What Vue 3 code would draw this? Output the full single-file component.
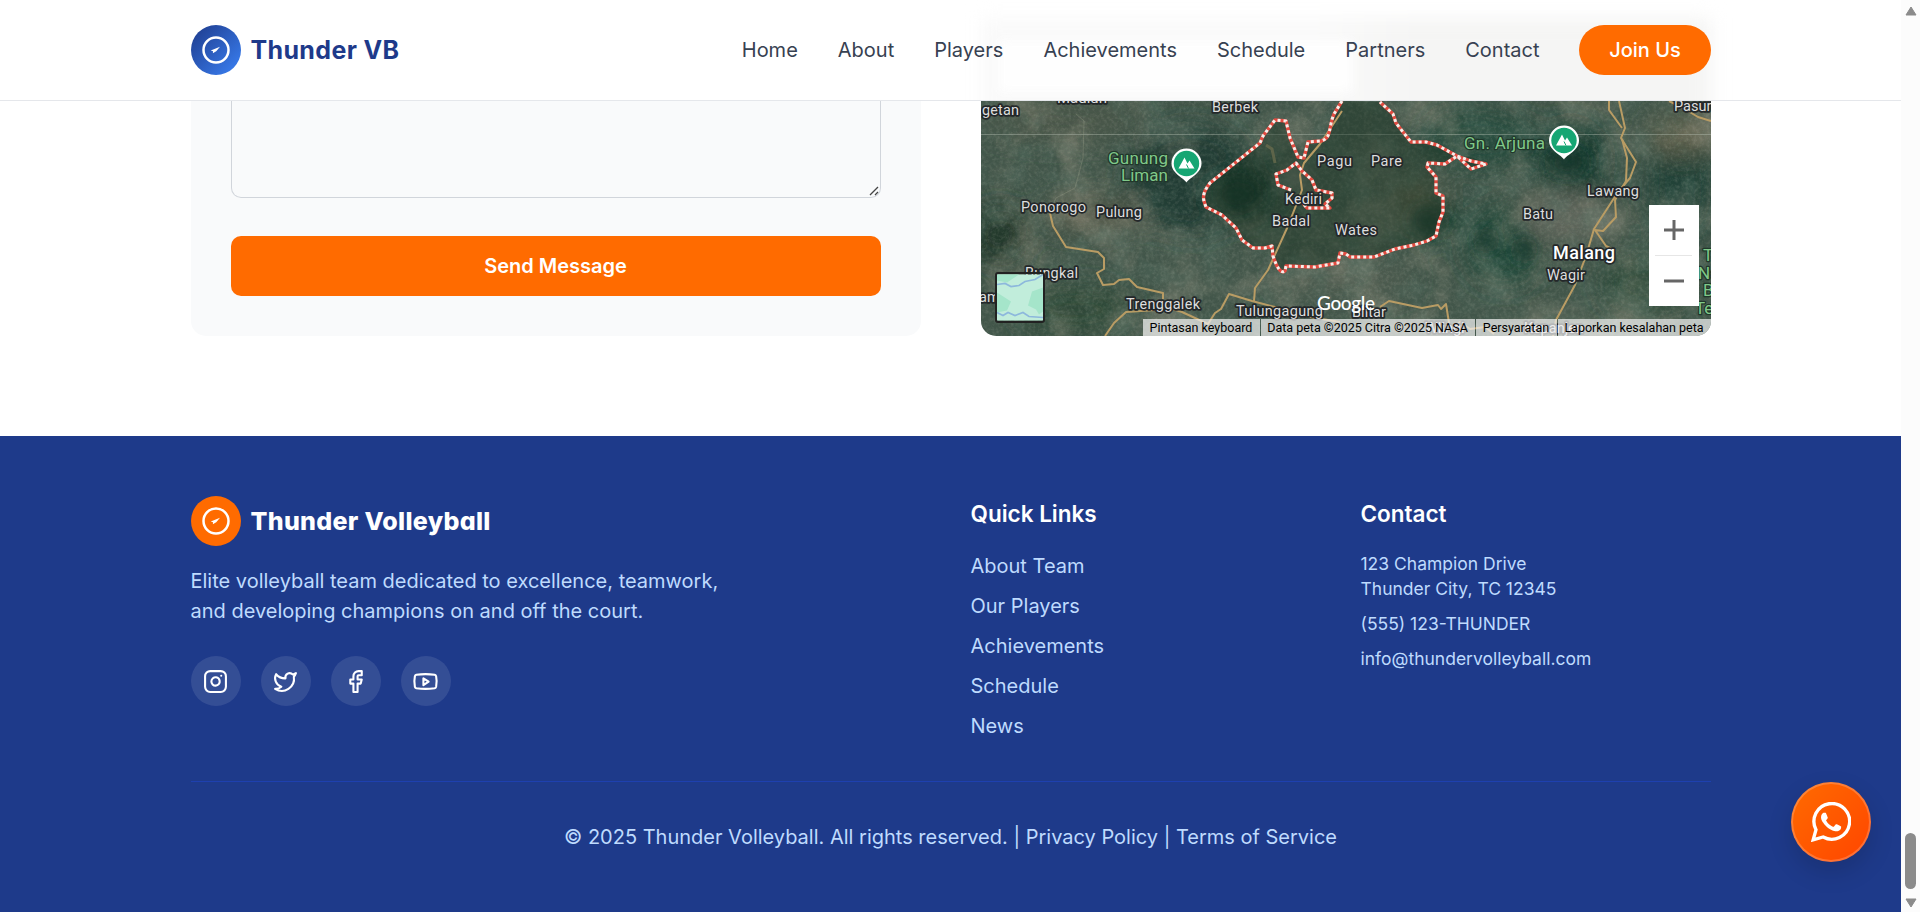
<script setup>
const nav = ['Home', 'About', 'Players', 'Achievements', 'Schedule', 'Partners', 'Contact']
const links = ['About Team', 'Our Players', 'Achievements', 'Schedule', 'News']
const labels = [
  { t: 'getan', x: 982, y: 115, s: 14.5 },
  { t: 'Madiun', x: 1057, y: 103, s: 15 },
  { t: 'Berbek', x: 1212, y: 112, s: 14.5 },
  { t: 'Pagu', x: 1317, y: 166, s: 14.5 },
  { t: 'Pare', x: 1371, y: 165.5, s: 14.5 },
  { t: 'Ponorogo', x: 1021, y: 211.5, s: 14.5 },
  { t: 'Pulung', x: 1096, y: 216.5, s: 14.5 },
  { t: 'Kediri', x: 1285, y: 203.5, s: 14.5 },
  { t: 'Badal', x: 1272, y: 226, s: 14.5 },
  { t: 'Wates', x: 1335, y: 234.5, s: 14.5 },
  { t: 'Bungkal', x: 1025, y: 278, s: 14.5 },
  { t: 'am', x: 979, y: 302, s: 14.5 },
  { t: 'Trenggalek', x: 1126, y: 308.5, s: 14.5 },
  { t: 'Tulungagung', x: 1236, y: 316, s: 14.5 },
  { t: 'Blitar', x: 1352, y: 317, s: 14.5 },
  { t: 'Batu', x: 1523, y: 219, s: 14.5 },
  { t: 'Lawang', x: 1587, y: 196, s: 14.5 },
  { t: 'Malang', x: 1553, y: 259, s: 18 },
  { t: 'Wagir', x: 1547, y: 279.5, s: 14.5 },
  { t: 'Pasuruan', x: 1674, y: 111, s: 14.5 },
  { t: 'Wlingi', x: 1425, y: 333, s: 14.5 },
  { t: 'Kepanjen', x: 1524, y: 333, s: 14.5 },
]
const greens = [
  { t: 'Gunung', x: 1168, y: 163.5, a: 'end' },
  { t: 'Liman', x: 1168, y: 181, a: 'end' },
  { t: 'Gn. Arjuna', x: 1545, y: 149, a: 'end' },
  { t: 'Taman', x: 1703, y: 261, a: 'start' },
  { t: 'Nasional', x: 1698, y: 279, a: 'start' },
  { t: 'Bromo', x: 1703, y: 296, a: 'start' },
  { t: 'Tengger', x: 1695, y: 314, a: 'start' },
]
const widths = { getan: 37, Berbek: 46, Pagu: 35, Pare: 31, Ponorogo: 65, Pulung: 46, Kediri: 37, Badal: 38, Wates: 42, Bungkal: 53, Trenggalek: 74, Tulungagung: 87, Blitar: 34, Batu: 30, Lawang: 52, Malang: 62, Wagir: 38, Gunung: 60, Liman: 47, 'Gn. Arjuna': 81 }
</script>

<template>
  <div class="page">
    <div class="site">
      <header class="header">
        <div class="haze"><span class="haze-map" /><span class="haze-card" /></div>
        <div class="wrap bar">
          <div class="brand">
            <span class="logo blue"><svg width="30" height="30" viewBox="0 0 24 24"><circle cx="12" cy="12" r="10" fill="none" stroke="#fff" stroke-width="2" /><path d="M15.2 9.4 7.800 12.400 9.600 12.900 9.500 14.600 12.200 13Z" fill="#fff" /></svg></span>
            <span class="name top-name">Thunder VB</span>
          </div>
          <nav class="nav">
            <a v-for="n in nav" :key="n">{{ n }}</a>
            <button class="join">Join Us</button>
          </nav>
        </div>
      </header>

      <main class="wrap contact">
        <form class="card">
          <div class="textarea">
            <svg class="grip" width="10" height="10" viewBox="0 0 10 10"><path d="M1 9 9 1M6 9 9 6" stroke="#444" stroke-width="1.3" fill="none" /></svg>
          </div>
          <button type="button" class="send">Send Message</button>
        </form>

        <div class="map">
          <svg class="terrain" width="730" height="235" viewBox="981 101 730 235">
            <defs>
              <filter id="grain" x="0" y="0" width="100%" height="100%">
                <feTurbulence type="fractalNoise" baseFrequency="0.28" numOctaves="3" seed="8" />
                <feColorMatrix values="0 0 0 0 0.6  0 0 0 0 0.6  0 0 0 0 0.5  1.5 0.5 0 0 -0.83" />
              </filter>
              <filter id="patch" x="0" y="0" width="100%" height="100%">
                <feTurbulence type="fractalNoise" baseFrequency="0.02" numOctaves="5" seed="21" />
                <feColorMatrix values="0 0 0 0 0.43  0 0 0 0 0.38  0 0 0 0 0.29  0 3 0 0 -1.35" />
              </filter>
              <filter id="shade" x="0" y="0" width="100%" height="100%">
                <feTurbulence type="fractalNoise" baseFrequency="0.035" numOctaves="5" seed="5" />
                <feColorMatrix values="0 0 0 0 0.1  0 0 0 0 0.18  0 0 0 0 0.14  0 0 3 0 -1.35" />
              </filter>
              <filter id="soft" x="-40%" y="-40%" width="180%" height="180%"><feGaussianBlur stdDeviation="12" /></filter>
              <filter id="soft2" x="-40%" y="-40%" width="180%" height="180%"><feGaussianBlur stdDeviation="7" /></filter>
            </defs>
            <rect x="981" y="101" width="730" height="235" fill="#42564a" />
            <g filter="url(#soft)">
              <ellipse cx="1060" cy="120" rx="80" ry="22" fill="#48574a" />
              <ellipse cx="1190" cy="180" rx="65" ry="55" fill="#233e34" />
              <ellipse cx="1240" cy="195" rx="38" ry="28" fill="#12362a" />
              <ellipse cx="1090" cy="215" rx="50" ry="16" fill="#535848" />
              <ellipse cx="1000" cy="235" rx="30" ry="30" fill="#21382b" />
              <ellipse cx="1075" cy="310" rx="60" ry="25" fill="#2d4a39" />
              <ellipse cx="1430" cy="218" rx="30" ry="22" fill="#0f3a2b" />
              <ellipse cx="1480" cy="140" rx="55" ry="30" fill="#284b3c" />
              <ellipse cx="1570" cy="160" rx="38" ry="40" fill="#173c30" />
              <ellipse cx="1505" cy="245" rx="40" ry="42" fill="#23493a" />
              <ellipse cx="1415" cy="195" rx="25" ry="18" fill="#5d604d" />
              <ellipse cx="1565" cy="218" rx="45" ry="26" fill="#60665b" />
              <ellipse cx="1680" cy="190" rx="35" ry="55" fill="#234238" />
              <ellipse cx="1680" cy="135" rx="32" ry="20" fill="#5d5e4b" />
              <ellipse cx="1650" cy="285" rx="50" ry="30" fill="#2d4b3b" />
              <ellipse cx="1345" cy="280" rx="70" ry="22" fill="#4d5c50" />
            </g>
            <rect x="981" y="101" width="730" height="235" filter="url(#patch)" opacity=".32" />
            <rect x="981" y="101" width="730" height="235" filter="url(#shade)" opacity=".35" />
            <rect x="981" y="101" width="730" height="235" filter="url(#grain)" opacity=".2" />
            <g filter="url(#soft2)" fill="#123629" opacity=".75">
              <ellipse cx="1238" cy="194" rx="22" ry="17" /><ellipse cx="1428" cy="220" rx="18" ry="16" />
              <ellipse cx="1568" cy="162" rx="20" ry="14" /><ellipse cx="1486" cy="240" rx="9" ry="12" /><ellipse cx="1524" cy="250" rx="9" ry="12" />
            </g>
            <ellipse cx="1294" cy="178" rx="17" ry="14" fill="#777a70" opacity=".6" filter="url(#soft2)" />
            <path d="M1266 145l6 4 3 14" stroke="#a99a70" stroke-width="3" fill="none" opacity=".7" />
            <path d="M981 134.5H1711" stroke="#b8c2b6" stroke-opacity=".4" />
            <path d="M1076 114 1084 121 1083 158 1075 188 1056 198 1050 211" fill="none" stroke="#a1a58f" stroke-opacity=".3" />
            <path class="district" d="M1342 101 1334 114C1328 128 1332 138 1321 141L1308 142 1304 158 1298 157 1290 138 1286 121 1275 120 1263 136 1260 143 1210 183C1200 196 1204 201 1206 207L1222 215 1236 228 1242 240 1253 248 1265 248 1272 246 1273 256C1277 268 1281 274 1285 271L1286 266 1315 267 1338 263 1340 253 1346 254 1350 257 1374 257 1395 249 1414 245 1427 241 1436 236 1439 222 1443 212 1443 196 1436 190 1436 177 1427 167 1428 163 1445 164 1457 156 1471 157 1487 164 1470 169 1455 156 1437 145 1426 142 1411 142 1403 132 1396 123 1393 114 1380 102" fill="#17301f" fill-opacity=".4" />
            <g class="roads">
              <path d="M1342 111 1320 144 1304 163 1300 175 1302 190 1288 226 1268 270 1255 288 1254 301" />
              <path d="M1050 213 1053 226 1066 247 1098 252 1104 258 1104 269 1097 273 1103 285 1114 284 1119 280 1129 279 1137 287 1163 293 1163 306 1182 312 1208 324 1215 313 1221 309 1229 294 1252 301 1275 307 1310 317 1340 322" />
              <path d="M1105 336 1114 323 1126 312 1156 310" />
              <path d="M1380 307 1389 301 1422 308 1438 305 1441 309 1446 304 1450 329 1460 322 1470 329 1485 327 1494 334" />
              <path d="M1619 101 1625 128 1621 138 1636 162 1630 178 1618 192 1594 229 1586 256 1575 285 1556 320 1553 336" />
              <path d="M1609 101V110L1622 128M1622 139 1627 158 1626 181 1615 200 1616 217 1603 231 1595 230 1606 246 1612 249" />
              <path d="M1669 101 1683 108 1698 117 1711 121" />
            </g>
            <g class="border">
              <path id="outer" d="M1342 101 1334 114C1328 128 1332 138 1321 141L1308 142 1304 158 1298 157 1290 138 1286 121 1275 120 1263 136 1260 143 1210 183C1200 196 1204 201 1206 207L1222 215 1236 228 1242 240 1253 248 1265 248 1272 246 1273 256C1277 268 1281 274 1285 271L1286 266 1315 267 1338 263 1340 253 1346 254 1350 257 1374 257 1395 249 1414 245 1427 241 1436 236 1439 222 1443 212 1443 196 1436 193 1436 177 1427 167 1428 163 1445 164 1457 156 1471 169 1486 164 1471 161 1457 156 1437 145 1426 142 1411 142 1403 132 1396 123 1393 114 1380 102" />
              <path id="inner" d="M1291 190 1278 185 1276 174 1287 170 1296 163 1302 171 1312 180 1316 190 1332 193 1332 198 1325 204 1330 208 1307 208 1301 201" />
              <g class="dashes"><use href="#outer" /><use href="#inner" /></g>
            </g>
            <g class="label">
              <text v-for="l in labels" :key="l.t" :x="l.x" :y="l.y" :font-size="l.s" :textLength="widths[l.t]" :class="{ big: l.s > 15 }">{{ l.t }}</text>
            </g>
            <g class="label park">
              <text v-for="g in greens" :key="g.t" :x="g.x" :y="g.y" font-size="17" :text-anchor="g.a" :textLength="widths[g.t]">{{ g.t }}</text>
            </g>
            <g v-for="p in [[1186.5, 163.5], [1564, 140.5]]" :key="p[0]" :transform="`translate(${p[0]} ${p[1]})`">
              <path d="M0 19C-3 14-15 10-15 0A15 15 0 0 1 15 0C15 10 3 14 0 19Z" fill="#fff" />
              <circle r="12.7" fill="#16a673" />
              <path d="M-8 5-2-6 1 0 3-3 8 5Z" fill="#fff" /><path d="M2 5 0 1" stroke="#16a673" />
            </g>
            <text class="google" x="1317" y="310" textLength="58">Google</text>
          </svg>
          <div class="layer">
            <svg width="46" height="46" viewBox="0 0 46 46">
              <path d="M0 0H46V46H0Z" fill="#c1eddb" /><path d="M0 18 14 27 10 36 0 38ZM46 13 35 17 31 31 39 35 42 40 46 37ZM0 0H22L10 8 0 6Z" fill="#a5e5ca" />
              <path d="M0 10 8 9 14 12 22 11 28 7 38 5 46 0M0 38 6 41 11 38 18 41 26 38 32 42 46 43" fill="none" stroke="#8db8dc" stroke-width="1.7" />
            </svg>
          </div>
          <div class="zoom"><span>
            <svg width="22" height="22" viewBox="0 0 22 22"><path d="M1 11H21M11 1V21" stroke="#666" stroke-width="3" /></svg></span><i /><span>
            <svg width="22" height="22" viewBox="0 0 22 22"><path d="M1 11H21" stroke="#666" stroke-width="3" /></svg></span>
          </div>
          <div class="credits"><span class="c1">Pintasan keyboard</span><span class="c2">Data peta ©2025 Citra ©2025 NASA</span><span class="c3">Persyaratan</span><span class="c4">Laporkan kesalahan peta</span></div>
        </div>
      </main>

      <footer class="footer">
        <div class="wrap">
          <div class="cols">
            <section>
              <div class="brand">
                <span class="logo orange"><svg width="30" height="30" viewBox="0 0 24 24"><circle cx="12" cy="12" r="10" fill="none" stroke="#fff" stroke-width="2" /><path d="M15.2 9.4 7.800 12.400 9.600 12.900 9.500 14.600 12.200 13Z" fill="#fff" /></svg></span>
                <span class="name foot-name">Thunder Volleyball</span>
              </div>
              <p class="about">Elite volleyball team dedicated to excellence, teamwork, and developing champions on and off the court.</p>
              <div class="social">
                <a><svg viewBox="0 0 24 24"><rect x="2" y="2" width="20" height="20" rx="5" /><path d="M16 11.37A4 4 0 1 1 12.63 8 4 4 0 0 1 16 11.37zM17.5 6.5h.01" /></svg></a>
                <a><svg viewBox="0 0 24 24"><path d="M22 4s-.7 2.1-2 3.4c1.6 10-9.4 17.3-18 11.6 2.2.1 4.4-.6 6-2C3 15.500.5 9.600 3 5c2.200 2.600 5.600 4.100 9 4-.9-4.200 4-6.600 7-3.800 1.100 0 3-1.200 3-1.200z" /></svg></a>
                <a><svg viewBox="0 0 24 24"><path d="M18 2h-3a5 5 0 0 0-5 5v3H7v4h3v8h4v-8h3l1-4h-4V7a1 1 0 0 1 1-1h3z" /></svg></a>
                <a><svg viewBox="0 0 24 24"><path d="M1.800 17a24.120 24.120 0 0 1 0-10 2 2 0 0 1 1.400-1.400 60 60 0 0 1 17.600 0A2 2 0 0 1 22.200 7a24.120 24.120 0 0 1 0 10 2 2 0 0 1-1.400 1.400 60 60 0 0 1-17.600 0A2 2 0 0 1 1.800 17" /><path d="m10 15.500 5-3.300-5-3.300z" /></svg></a>
              </div>
            </section>
            <section>
              <h3>Quick Links</h3>
              <ul><li v-for="l in links" :key="l">{{ l }}</li></ul>
            </section>
            <section>
              <h3>Contact</h3>
              <address><p>123 Champion Drive<br />Thunder City, TC 12345</p><p>(555) 123-THUNDER</p><p>info@thundervolleyball.com</p></address>
            </section>
          </div>
          <p class="legal">© 2025 Thunder Volleyball. All rights reserved. | Privacy Policy | Terms of Service</p>
        </div>
      </footer>
    </div>

    <div class="scrollbar">
      <svg width="12" height="10" viewBox="0 0 12 10"><path d="M6 1 11 9H1Z" fill="#8b8b8b" stroke="#8b8b8b" stroke-linejoin="round" /></svg>
      <span class="thumb" />
      <svg width="12" height="10" viewBox="0 0 12 10"><path d="M6 9 11 1H1Z" fill="#8b8b8b" stroke="#8b8b8b" stroke-linejoin="round" /></svg>
    </div>

    <a class="chat">
      <svg width="40" height="40" viewBox="0 0 24 24" fill="#fff"><path d="M17.472 14.382c-.297-.149-1.758-.867-2.030-.967-.273-.099-.471-.148-.670.150-.197.297-.767.966-.940 1.164-.173.199-.347.223-.644.075-.297-.150-1.255-.463-2.390-1.475-.883-.788-1.480-1.761-1.653-2.059-.173-.297-.018-.458.130-.606.134-.133.298-.347.446-.520.149-.174.198-.298.298-.497.099-.198.050-.371-.025-.520-.075-.149-.669-1.612-.916-2.207-.242-.579-.487-.500-.669-.510-.173-.008-.371-.010-.570-.010-.198 0-.520.074-.792.372-.272.297-1.040 1.016-1.040 2.479 0 1.462 1.065 2.875 1.213 3.074.149.198 2.096 3.200 5.077 4.487.709.306 1.262.489 1.694.625.712.227 1.360.195 1.871.118.571-.085 1.758-.719 2.006-1.413.248-.694.248-1.289.173-1.413-.074-.124-.272-.198-.570-.347" /><path d="M1.300 22.700 3 16.600A10.700 10.700 0 1 1 7.300 21Z" fill="none" stroke="#fff" stroke-width="2" /></svg>
    </a>
  </div>
</template>

<style>
html, body { overflow: hidden; background: #fff; }
</style>

<style scoped>
* { box-sizing: border-box; }
p, h3, ul { margin: 0; padding: 0; }
.page { width: 1920px; height: 912px; display: grid; grid-template-columns: 1901px 19px; overflow: hidden; position: relative; font: 20px/30px Inter, "Liberation Sans", sans-serif; color: #374151; }
.site { min-width: 0; }
.wrap { width: 1520px; margin: 0 auto; }
.header { height: 101px; border-bottom: 1px solid #e5e7eb; background: #fff; position: relative; }
.haze { position: absolute; inset: 0; overflow: hidden; }
.haze span { position: absolute; display: block; }
.haze-map { left: 981px; top: 18px; width: 730px; height: 120px; background: linear-gradient(90deg, #fafafa 45%, #f5f5f4 60%); filter: blur(9px); }
.haze-card { left: 998px; top: 40px; width: 355px; height: 52px; background: #fefefe; filter: blur(6px); }
.bar { height: 100px; display: flex; align-items: center; justify-content: space-between; position: relative; }
.brand { display: flex; align-items: center; gap: 10px; height: 50px; }
.logo { width: 50px; height: 50px; border-radius: 50%; display: flex; align-items: center; justify-content: center; }
.blue { background: linear-gradient(135deg, #1e3a8a, #3b82f6); }
.orange { background: #ff6b00; }
.name { font-weight: 700; font-size: 25px; font-feature-settings: "cv11"; white-space: nowrap; }
.top-name { color: #1e3a8a; letter-spacing: .35px; }
.foot-name { color: #fff; font-weight: 800; letter-spacing: .3px; }
.nav { display: flex; align-items: center; gap: 40px; white-space: nowrap; }
button { border: 0; font: inherit; color: #fff; background: #ff6b00; padding: 0; }
.join { width: 132px; height: 50px; border-radius: 25px; font-weight: 500; margin-left: -1px; padding-left: 1px; }
.contact { height: 335px; display: flex; justify-content: space-between; align-items: flex-start; }
.card { width: 730px; height: 235px; padding: 0 40px 40px; background: #f9fafb; border-radius: 0 0 15px 15px; }
.textarea { height: 97px; border: 1px solid #d1d5db; border-top: 0; border-radius: 0 0 10px 10px; display: flex; justify-content: flex-end; align-items: flex-end; padding: 1px; }
.send { display: block; width: 100%; height: 60px; margin-top: 38px; border-radius: 10px; font-weight: 600; }
.map { width: 730px; height: 235px; position: relative; overflow: hidden; border-radius: 0 0 15px 15px; }
.terrain { display: block; }
.roads path { fill: none; stroke: #b99c64; stroke-width: 2; stroke-linejoin: round; }
.border { fill: none; stroke: #e34b40; stroke-width: 3.4; stroke-linejoin: round; }
.dashes { stroke: #f4efeb; stroke-dasharray: 3 3; stroke-width: 3; }
.label { font-family: Roboto, sans-serif; fill: #dedede; stroke: #24282a; stroke-width: 3.5; stroke-linejoin: round; paint-order: stroke; }
.label .big { font-weight: 500; fill: #fff; }
.park { fill: #80c989; stroke: #21372b; stroke-width: 2.5; }
.google { font: 500 19px/1 Lato, sans-serif; fill: #fff; }
.layer { position: absolute; left: 14px; top: 171px; width: 50px; height: 51px; border: 2px solid #222; border-radius: 3px; overflow: hidden; }
.layer svg { display: block; width: 100%; height: 100%; }
.zoom { position: absolute; right: 12px; top: 104px; width: 50px; height: 101px; background: #fff; display: flex; flex-direction: column; align-items: center; }
.zoom span { flex: 1; display: flex; align-items: center; }
.zoom i { width: 37px; height: 1px; background: #e6e6e6; }
.credits { position: absolute; right: 0; bottom: 0; width: 568px; height: 17px; display: flex; font: 12.5px/17px Roboto, sans-serif; color: #000; white-space: nowrap; }
.credits span { background: rgba(245,245,245,.7); text-align: center; margin-right: 1px; }
.c1 { width: 117px; } .c2 { width: 214px; } .c3 { width: 81px; } .c4 { flex: 1; }
.credits .c4 { margin-right: 0; }
.footer { height: 476px; padding-top: 60px; background: #1e3a8a; color: #bfdbfe; }
.cols { display: grid; grid-template-columns: 740px 350px 350px; gap: 40px; height: 245px; }
.about { width: 560px; margin-top: 20px; }
.social { display: flex; gap: 20px; margin-top: 30px; }
.social a { width: 50px; height: 50px; border-radius: 50%; background: rgba(255,255,255,.1); display: flex; align-items: center; justify-content: center; }
.social svg { width: 25px; height: 25px; fill: none; stroke: #fff; stroke-width: 2; stroke-linecap: round; stroke-linejoin: round; overflow: visible; }
h3 { font-size: 22.5px; line-height: 35px; font-weight: 600; color: #fff; margin-bottom: 20px; }
ul { list-style: none; display: grid; gap: 10px; }
address { display: grid; gap: 10px; font-style: normal; font-size: 17.5px; line-height: 25px; }
.legal { margin-top: 40px; padding-top: 40px; border-top: 1px solid #1e40af; text-align: center; }
.scrollbar { background: #fcfcfc; display: flex; flex-direction: column; align-items: center; padding: 6px 0 4px; }
.thumb { width: 11px; height: 56px; border-radius: 6px; background: #8b8b8b; margin: auto 0 9px; }
.chat { position: absolute; left: 1791px; top: 782px; width: 80px; height: 80px; border-radius: 50%; border: 2px solid rgba(255,255,255,.2); background: linear-gradient(135deg, #ff6b00, #ff4500) border-box; box-shadow: 0 10px 25px rgba(0,0,0,.15); display: flex; align-items: center; justify-content: center; }
</style>
